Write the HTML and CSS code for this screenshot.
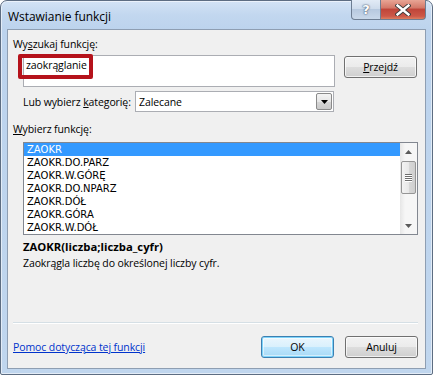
FILE: index.html
```html
<!DOCTYPE html>
<html lang="pl">
<head>
<meta charset="utf-8">
<title>Wstawianie funkcji</title>
<link rel="stylesheet" href="styles.css">
</head>
<body>
<div class="window">
  <div class="titlebar">
    <span class="title">Wstawianie funkcji</span>
    <div class="caption-buttons">
      <span class="cap-btn help">?</span>
      <span class="cap-btn close">
        <svg width="16" height="12" viewBox="0 0 16 12"><path d="M2.5 1.5 L13.5 10.5 M13.5 1.5 L2.5 10.5" stroke="#3a3a3a" stroke-width="4.2" stroke-linecap="square"/><path d="M2.5 1.5 L13.5 10.5 M13.5 1.5 L2.5 10.5" stroke="#ffffff" stroke-width="2.4" stroke-linecap="square"/></svg>
      </span>
    </div>
  </div>
  <div class="client">
    <div class="label">Wy<u>s</u>zukaj funkcję:</div>
    <div class="search-row">
      <div class="search-box">
        <div class="search-text">zaokrąglanie</div>
        <div class="highlight"></div>
      </div>
      <button class="btn go"><u>P</u>rzejdź</button>
    </div>
    <div class="category-row">
      <span class="cat-label">Lub wybierz <u>k</u>ategorię:</span>
      <div class="select">
        <span class="select-text">Zalecane</span>
        <span class="select-arrow"><svg width="7" height="4" viewBox="0 0 7 4"><path d="M0 0 H7 L3.5 4 Z" fill="#000"/></svg></span>
      </div>
    </div>
    <div class="label list-label"><u>W</u>ybierz funkcję:</div>
    <div class="listbox">
      <ul class="items">
        <li class="selected">ZAOKR</li>
        <li>ZAOKR.DO.PARZ</li>
        <li>ZAOKR.W.GÓRĘ</li>
        <li>ZAOKR.DO.NPARZ</li>
        <li>ZAOKR.DÓŁ</li>
        <li>ZAOKR.GÓRA</li>
        <li>ZAOKR.W.DÓŁ</li>
      </ul>
      <div class="scrollbar">
        <span class="sb-arrow"><svg width="7" height="4" viewBox="0 0 7 4"><path d="M3.5 0 L7 4 H0 Z" fill="#5a5a5a"/></svg></span>
        <div class="sb-track">
          <div class="sb-thumb">
            <span class="grip"></span><span class="grip"></span><span class="grip"></span><span class="grip"></span>
          </div>
        </div>
        <span class="sb-arrow"><svg width="7" height="4" viewBox="0 0 7 4"><path d="M0 0 H7 L3.5 4 Z" fill="#5a5a5a"/></svg></span>
      </div>
    </div>
    <div class="signature">ZAOKR(liczba;liczba_cyfr)</div>
    <div class="description">Zaokrągla liczbę do określonej liczby cyfr.</div>
    <div class="separator"></div>
    <div class="bottom-row">
      <a class="help-link" href="#">Pomoc dotycząca tej funkcji</a>
      <div class="actions">
        <button class="btn default">OK</button>
        <button class="btn">Anuluj</button>
      </div>
    </div>
  </div>
</div>
</body>
</html>
```
FILE: styles.css
```css
* { box-sizing: border-box; }
html, body { margin: 0; padding: 0; }
body {
  width: 433px;
  height: 375px;
  background: #ffffff;
  font-family: "Open Sans", "Noto Sans", sans-serif;
  font-size: 10.5px;
  letter-spacing: -0.1px;
  color: #000;
  overflow: hidden;
}
.window {
  width: 433px;
  height: 375px;
  border: 1px solid #5d6d82;
  border-radius: 7px 7px 2px 2px;
  background: linear-gradient(180deg, #d3e3f5 0px, #c2d7ef 14px, #bcd3ed 30px, #c0d6ee 100%);
  box-shadow: inset 0 0 0 1px rgba(255,255,255,0.55);
  padding: 0 6px 5px 6px;
  display: flex;
  flex-direction: column;
}
.titlebar {
  height: 28px;
  display: flex;
  align-items: flex-start;
  justify-content: space-between;
}
.title {
  margin-top: 7px;
  margin-left: 1px;
  font-size: 12px;
  letter-spacing: -0.05px;
  color: #000;
}
.caption-buttons {
  display: flex;
  margin-top: -1px;
}
.cap-btn {
  height: 20px;
  display: flex;
  align-items: center;
  justify-content: center;
  border: 1px solid #6d7d92;
  border-top: none;
}
.help {
  width: 30px;
  border-radius: 0 0 0 4px;
  background: linear-gradient(180deg, #e2ebf6 0%, #cfdcec 45%, #b7c9df 50%, #c9d8ea 100%);
  color: #fff;
  font-family: "DejaVu Sans", sans-serif;
  font-weight: bold;
  font-size: 13px;
  text-shadow: 0 0 2px #40506a, 0 0 1px #40506a;
}
.close {
  width: 45px;
  border-left: none;
  border-radius: 0 0 4px 0;
  background: linear-gradient(180deg, #e8a595 0%, #d47a6a 40%, #c0463a 50%, #cc5848 85%, #dd7e60 100%);
}
.client {
  flex: 1;
  background: #f0f0f0;
  border: 1px solid #8e9eb2;
  padding: 0 7px 0 5px;
  display: flex;
  flex-direction: column;
}
.label {
  margin-top: 6px;
  height: 16px;
  line-height: 16px;
  white-space: nowrap;
}
.search-row {
  display: flex;
  align-items: flex-start;
  margin-top: 3px;
  padding-left: 10px;
}
.search-box {
  position: relative;
  width: 312px;
  height: 32px;
  background: #fff;
  border: 1px solid #abadb3;
}
.search-text {
  padding: 2px 0 0 2px;
  line-height: 15px;
}
.highlight {
  position: absolute;
  left: -6px;
  top: -2px;
  width: 75px;
  height: 25px;
  border: 4px solid #b5121b;
  border-radius: 2px;
}
.btn {
  width: 73px;
  height: 22px;
  font-family: inherit;
  font-size: 10.5px;
  letter-spacing: -0.1px;
  color: #000;
  border: 1px solid #707070;
  border-radius: 3px;
  background: linear-gradient(180deg, #f2f2f2 0%, #ebebeb 50%, #dddddd 51%, #cfcfcf 100%);
  box-shadow: inset 0 0 0 1px rgba(255,255,255,0.7);
  padding: 0;
  line-height: 18px;
}
.go {
  margin-left: 9px;
  margin-top: 1px;
}
.category-row {
  display: flex;
  align-items: center;
  margin-top: 4px;
  padding-left: 10px;
  height: 21px;
}
.cat-label {
  width: 112px;
  white-space: nowrap;
}
.select {
  width: 199px;
  height: 21px;
  background: #fff;
  border: 1px solid #abadb3;
  display: flex;
  align-items: center;
  justify-content: space-between;
}
.select-text {
  padding-left: 3px;
}
.select-arrow {
  width: 16px;
  height: 17px;
  margin-right: 1px;
  border: 1px solid #8a8a8a;
  border-radius: 2px;
  background: linear-gradient(180deg, #f4f4f4 0%, #e6e6e6 50%, #d6d6d6 51%, #c9c9c9 100%);
  display: flex;
  align-items: center;
  justify-content: center;
}
.list-label {
  margin-top: 9px;
}
.listbox {
  margin-top: 5px;
  margin-left: 10px;
  width: 395px;
  height: 93px;
  background: #fff;
  border: 1px solid #828790;
  display: flex;
}
.items {
  list-style: none;
  margin: 0;
  padding: 0;
  flex: 1;
  font-family: "DejaVu Sans", sans-serif;
  font-size: 10px;
  letter-spacing: 0;
}
.items li {
  height: 13px;
  line-height: 13px;
  padding-left: 3px;
}
.items li.selected {
  background: #3399ff;
  color: #fff;
}
.scrollbar {
  width: 17px;
  display: flex;
  flex-direction: column;
  background: linear-gradient(90deg, #e6e6e6 0%, #f6f6f6 30%, #f6f6f6 100%);
}
.sb-arrow {
  height: 17px;
  display: flex;
  align-items: center;
  justify-content: center;
}
.sb-track {
  flex: 1;
  padding: 1px;
}
.sb-thumb {
  width: 15px;
  height: 33px;
  border: 1px solid #959595;
  border-radius: 2px;
  background: linear-gradient(90deg, #f3f3f3 0%, #e8e8e8 50%, #d8d8d8 51%, #cfcfcf 100%);
  display: flex;
  flex-direction: column;
  align-items: center;
  justify-content: center;
  gap: 1px;
}
.grip {
  width: 7px;
  height: 1px;
  background: #6e6e6e;
  box-shadow: 0 1px 0 #fff;
}
.signature {
  margin-top: 4px;
  margin-left: 10px;
  font-weight: bold;
  font-size: 11.3px;
  letter-spacing: 0;
  line-height: 16px;
}
.description {
  margin-left: 10px;
  line-height: 16px;
}
.separator {
  margin-top: 51px;
  width: 405px;
  height: 2px;
  background: #d5dfe5;
  border-bottom: 1px solid #fff;
}
.bottom-row {
  display: flex;
  align-items: center;
  justify-content: space-between;
  margin-top: 12px;
  width: 405px;
}
.help-link {
  color: #0033cc;
  text-decoration: underline;
}
.actions {
  display: flex;
  gap: 11px;
}
.btn.default {
  border-color: #3c7fb1;
  box-shadow: inset 0 0 0 1px #7fd4fa, inset 0 0 0 2px rgba(255,255,255,0.5);
  background: linear-gradient(180deg, #eaf6fd 0%, #d9f0fc 50%, #bee6fd 51%, #a7d9f5 100%);
}
```
